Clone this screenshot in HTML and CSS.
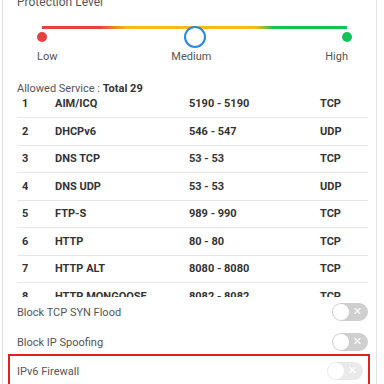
FILE: index.html
```html
<!DOCTYPE html>
<html>
	<head>
		<meta charset="utf-8" lang="en" />
		<title>Firewall</title>
		<link rel="stylesheet" href="styles.css">
	</head>
	<body>
		<div class="panel">
			<h2 class="title">Protection Level</h2>

			<div class="slider">
				<div class="track"></div>
				<span class="dot dot-low"></span>
				<span class="dot dot-high"></span>
				<span class="knob"></span>
			</div>
			<div class="levels">
				<span>Low</span>
				<span>Medium</span>
				<span>High</span>
			</div>

			<p class="allowed">Allowed Service : <b>Total 29</b></p>

			<div class="services">
				<ul class="service-list">
					<li><span>1</span><span>AIM/ICQ</span><span>5190 - 5190</span><span>TCP</span></li>
					<li><span>2</span><span>DHCPv6</span><span>546 - 547</span><span>UDP</span></li>
					<li><span>3</span><span>DNS TCP</span><span>53 - 53</span><span>TCP</span></li>
					<li><span>4</span><span>DNS UDP</span><span>53 - 53</span><span>UDP</span></li>
					<li><span>5</span><span>FTP-S</span><span>989 - 990</span><span>TCP</span></li>
					<li><span>6</span><span>HTTP</span><span>80 - 80</span><span>TCP</span></li>
					<li><span>7</span><span>HTTP ALT</span><span>8080 - 8080</span><span>TCP</span></li>
					<li><span>8</span><span>HTTP MONGOOSE</span><span>8082 - 8082</span><span>TCP</span></li>
				</ul>
			</div>

			<div class="option">
				<span>Block TCP SYN Flood</span>
				<span class="toggle"><span class="toggle-x">&#x2715;</span></span>
			</div>
			<div class="option">
				<span>Block IP Spoofing</span>
				<span class="toggle"><span class="toggle-x">&#x2715;</span></span>
			</div>
			<div class="option highlight">
				<span>IPv6 Firewall</span>
				<span class="toggle disabled"><span class="toggle-x">&#x2715;</span></span>
			</div>
		</div>
	</body>
</html>
```

FILE: styles.css
```css
body {
	background: #fff;
	color: #555;
	font-family: Roboto, "Liberation Sans", Arial, sans-serif;
	font-size: 11px;
	margin: 0;
	overflow: hidden;
}
ul {
	list-style-type: none;
	margin: 0;
	padding: 0;
}

/* Panel */
.panel {
	border-left: 1px solid #e2e2e2;
	border-right: 1px solid #e2e2e2;
	margin: 0 7px 0 2px;
	padding: 0 8px 0 14px;
}
.title {
	font-size: 12px;
	font-weight: normal;
	line-height: 14px;
	margin: -5px 0 0;
}

/* Level slider */
.slider {
	height: 22px;
	margin: 17px 21px 0 25px;
	position: relative;
}
.track {
	background: linear-gradient(to right, #e64141 0%, #e64141 19%, #f6bb17 28%, #f6bb17 70%, #15c15b 76%, #15c15b 100%);
	height: 3px;
	margin-top: 10px;
}
.dot {
	border-radius: 50%;
	height: 10px;
	position: absolute;
	top: 6px;
	width: 10px;
}
.dot-low {
	background: #e64141;
	left: -5px;
}
.dot-high {
	background: #15c15b;
	right: -5px;
}
.knob {
	background: #fff;
	border: 2px solid #2b87e3;
	border-radius: 50%;
	box-sizing: border-box;
	height: 22px;
	left: 50%;
	margin-left: -11px;
	position: absolute;
	top: 0;
	width: 22px;
}
.levels {
	display: flex;
	justify-content: space-between;
	line-height: 14px;
	margin: 2px 20px 0 20px;
}

/* Services */
.allowed {
	line-height: 14px;
	margin: 18px 0 0;
}
.allowed b { color: #333; }
.services {
	height: 200px;
	margin-top: 1px;
	overflow: hidden;
}
.service-list { margin-top: -6.5px; }
.service-list li {
	align-items: center;
	border-bottom: 1px solid #e6e6e6;
	color: #333;
	display: grid;
	font-weight: bold;
	grid-template-columns: 38px 134px 131px 1fr;
	height: 26.5px;
}
.service-list li span:first-child { padding-left: 5px; }

/* Options */
.option {
	align-items: center;
	display: flex;
	height: 30px;
	justify-content: space-between;
}
.highlight {
	border: 2px solid #e41e26;
	border-bottom: 0;
	margin: -3px -2px 0 -9px;
	padding: 0 5px 4px 7px;
}
.toggle {
	background: #cfcfcf;
	border-radius: 9px;
	box-sizing: border-box;
	display: flex;
	height: 18px;
	justify-content: flex-end;
	padding: 1px 6px 0 0;
	position: relative;
	width: 36px;
}
.toggle::before {
	background: #fff;
	border-radius: 50%;
	content: "";
	height: 16px;
	left: 1px;
	position: absolute;
	top: 1px;
	width: 16px;
}
.toggle-x {
	color: #fff;
	font-family: "DejaVu Sans", sans-serif;
	font-size: 11px;
	font-weight: bold;
	line-height: 16px;
}
.toggle.disabled { opacity: 0.45; }
```
